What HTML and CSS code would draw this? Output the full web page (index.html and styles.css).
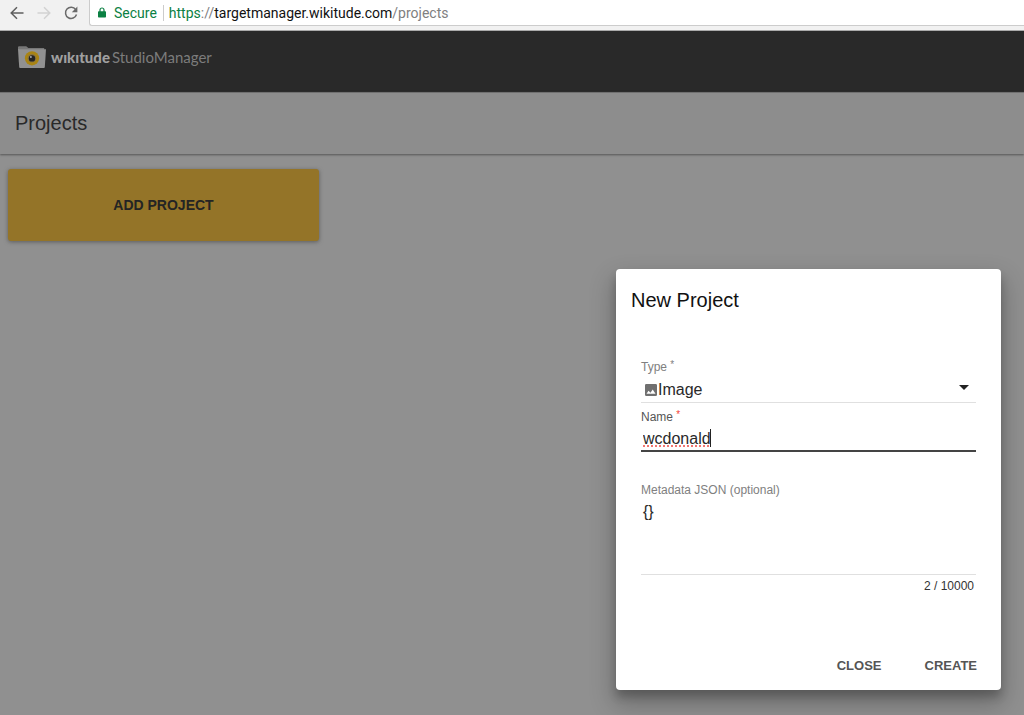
FILE: index.html
```html
<!DOCTYPE html>
<html lang="en">
<head>
<meta charset="utf-8">
<title>Wikitude Studio Manager</title>
<link rel="stylesheet" href="styles.css">
</head>
<body>
<div class="browser-bar">
  <div class="nav">
    <button class="nav-btn" aria-label="Back"><svg width="14" height="14" viewBox="0 0 14 14"><path d="M13.500 7H1.500M7 1.200 1.200 7 7 12.800" fill="none" stroke="#5f5f5f" stroke-width="1.500"/></svg></button>
    <button class="nav-btn" aria-label="Forward" disabled><svg width="14" height="14" viewBox="0 0 14 14"><path d="M.5 7h12M7 1.200 12.800 7 7 12.800" fill="none" stroke="#d2d2d2" stroke-width="1.500"/></svg></button>
    <button class="nav-btn" aria-label="Reload"><svg width="14" height="14" viewBox="0 0 14 14"><path d="M11.700 3.600A5.600 5.600 0 1 0 12.500 8.500" fill="none" stroke="#6a6a6a" stroke-width="1.500"/><path d="M13.400.6v5.600H7.800z" fill="#6a6a6a"/></svg></button>
  </div>
  <div class="address">
    <svg width="8" height="11" viewBox="0 0 8 11"><path d="M2 5V3a2 2 0 0 1 4 0v2" fill="none" stroke="#0b8043" stroke-width="1.200"/><rect y="4.200" width="8" height="6.300" rx=".8" fill="#0b8043"/></svg>
    <span class="secure">Secure</span>
    <a class="url" href="#projects"><span class="scheme">https</span><span class="dim">://</span>targetmanager.wikitude.com<span class="dim">/projects</span></a>
  </div>
</div>

<header class="app-header">
  <svg width="28" height="24" viewBox="0 0 28 24"><path d="M0 2.300Q0 1.200 1.100 1.200H8.200L10.400 3H26.200V5H0z" fill="#777"/><path d="M0 4.300H28L26.800 22.200Q26.700 23 25.800 23H2.200Q1.300 23 1.200 22.200z" fill="#919191"/><circle cx="14" cy="13.300" r="7.100" fill="#a98413"/><circle cx="14" cy="13.300" r="4.300" fill="#8b7540"/><circle cx="14" cy="13.400" r="3.200" fill="#242424"/><circle cx="12.900" cy="12.100" r="1" fill="#a6aaae"/></svg>
  <span class="brand"><b>wıkıtude</b><span>StudioManager</span></span>
</header>

<div class="toolbar"><h1>Projects</h1></div>

<main class="content">
  <button class="add-project">ADD PROJECT</button>
</main>

<form class="dialog" role="dialog" aria-labelledby="dialog-title">
  <h2 id="dialog-title">New Project</h2>
  <div class="fields">
    <div class="field">
      <label for="type">Type <span class="req">*</span></label>
      <div class="control">
        <select id="type" class="line"><option>Image</option></select>
        <svg class="type-icon" width="12" height="12" viewBox="0 0 12 12"><path fill-rule="evenodd" d="M1.300 0h9.400Q12 0 12 1.300v9.400Q12 12 10.700 12H1.300Q0 12 0 10.700V1.300Q0 0 1.300 0zM3.500 6.800 1.500 9.800h9L7.700 5.500 5.500 8.700z" fill="#707070"/></svg>
        <svg class="arrow" width="10" height="5" viewBox="0 0 10 5"><path d="M0 0h10L5 5z" fill="#222"/></svg>
      </div>
    </div>
    <div class="field focused">
      <label for="name">Name <span class="req">*</span></label>
      <div class="control">
        <input id="name" class="line" type="text" value="wcdonald" spellcheck="false">
        <span class="spelling"></span>
        <span class="caret"></span>
      </div>
    </div>
    <div class="field metadata">
      <label for="meta">Metadata JSON (optional)</label>
      <textarea id="meta" class="line" spellcheck="false">{}</textarea>
      <div class="counter">2 / 10000</div>
    </div>
  </div>
  <div class="actions">
    <button type="button">CLOSE</button>
    <button type="button">CREATE</button>
  </div>
</form>
</body>
</html>
```
FILE: styles.css
```css
* { box-sizing: border-box; }
body {
  margin: 0;
  min-height: 100vh;
  position: relative;
  background: #909090;
  font-family: "Liberation Sans", Arial, sans-serif;
  color: #292929;
}
button, input, select, textarea { font-family: inherit; margin: 0; padding: 0; border: 0; background: none; border-radius: 0; outline: 0; }
h1, h2 { margin: 0; font-size: 20px; font-weight: 400; line-height: 24px; }
svg { display: block; flex: none; }

.browser-bar {
  display: flex;
  height: 31px;
  padding-left: 10px;
  background: #f1f1f1;
  border-bottom: 1px solid #aaa;
}
.nav { display: flex; gap: 13px; height: 25px; align-items: center; }
.nav-btn { width: 14px; height: 14px; }
.address {
  flex: 1;
  display: flex;
  align-items: center;
  height: 26px;
  margin-left: 11px;
  padding-left: 8px;
  background: #fff;
  border: 1px solid #ccc;
  border-width: 0 0 1px 1px;
  border-radius: 0 0 0 3px;
  font: 14px/20px Roboto, sans-serif;
}
.secure { margin-left: 8px; padding-right: 6px; border-right: 1px solid #ccc; color: #0b8043; line-height: 16px; }
.url { margin-left: 5px; color: #111; text-decoration: none; }
.scheme { color: #0b8043; }
.dim { color: #808080; }

.app-header {
  display: flex;
  align-items: center;
  gap: 5px;
  height: 61px;
  padding: 0 18px 9px;
  background: #292929;
}
.brand { display: flex; gap: 2px; font: 15px/20px Lato, sans-serif; color: #7c7c7c; }
.brand b { font-weight: 900; color: #a0a0a0; }

.toolbar {
  display: flex;
  align-items: center;
  height: 62px;
  padding: 0 15px 2px;
  background: #8d8d8d;
  border-top: 1px solid #707070;
  box-shadow: 0 1px 2px #555;
}

.content { padding: 15px 8px; }
.add-project {
  display: block;
  width: 311px;
  height: 72px;
  border-radius: 3px;
  background: #947428;
  box-shadow: 0 1px 4px #5c5c5c;
  color: #242424;
  font-size: 14px;
  font-weight: 700;
}

.dialog {
  position: absolute;
  right: 23px;
  bottom: 25px;
  width: 385px;
  padding: 19px 15px 10px;
  background: #fff;
  border-radius: 4px;
  box-shadow: 0 7px 9px rgba(0,0,0,.2), 0 12px 24px 3px rgba(0,0,0,.24);
}
.dialog h2 { color: #111; }
.fields { padding: 46px 10px 0; }
.field { display: flex; flex-direction: column; }
.field label { display: block; height: 18px; font-size: 12px; line-height: 18px; color: #808080; }
.req { font-size: 10px; line-height: 10px; vertical-align: 3px; }
.focused { margin-top: 5px; }
.focused label { color: #555; }
.focused .req { color: #f44336; }
.control { position: relative; display: grid; }
.line {
  width: 100%;
  color: #292929;
  font-size: 16px;
  border-bottom: 1px solid #e0e0e0;
}
select.line { appearance: none; height: 27px; padding-left: 17px; }
.type-icon { position: absolute; left: 4px; top: 8px; }
.arrow { position: absolute; right: 7px; top: 9px; }
input.line { height: 26px; padding: 1px 2px 0; border-bottom: 2px solid #444; caret-color: transparent; }
.spelling { position: absolute; left: 2px; bottom: 5px; width: 66px; border-bottom: 2px dotted #f27570; }
.caret { position: absolute; left: 69px; top: 3px; width: 1px; height: 18px; background: #222; }
.metadata { margin-top: 29px; }
textarea.line { display: block; height: 76px; padding: 3px 2px; line-height: 20px; resize: none; overflow: hidden; }
.counter { padding: 3px 2px 0; text-align: right; font-size: 12px; line-height: 16px; color: #333; }
.actions { display: flex; justify-content: flex-end; gap: 27px; margin-top: 56px; padding-right: 1px; }
.actions button { height: 30px; padding: 0 8px; color: #555; font-size: 13px; font-weight: 700; }
```
